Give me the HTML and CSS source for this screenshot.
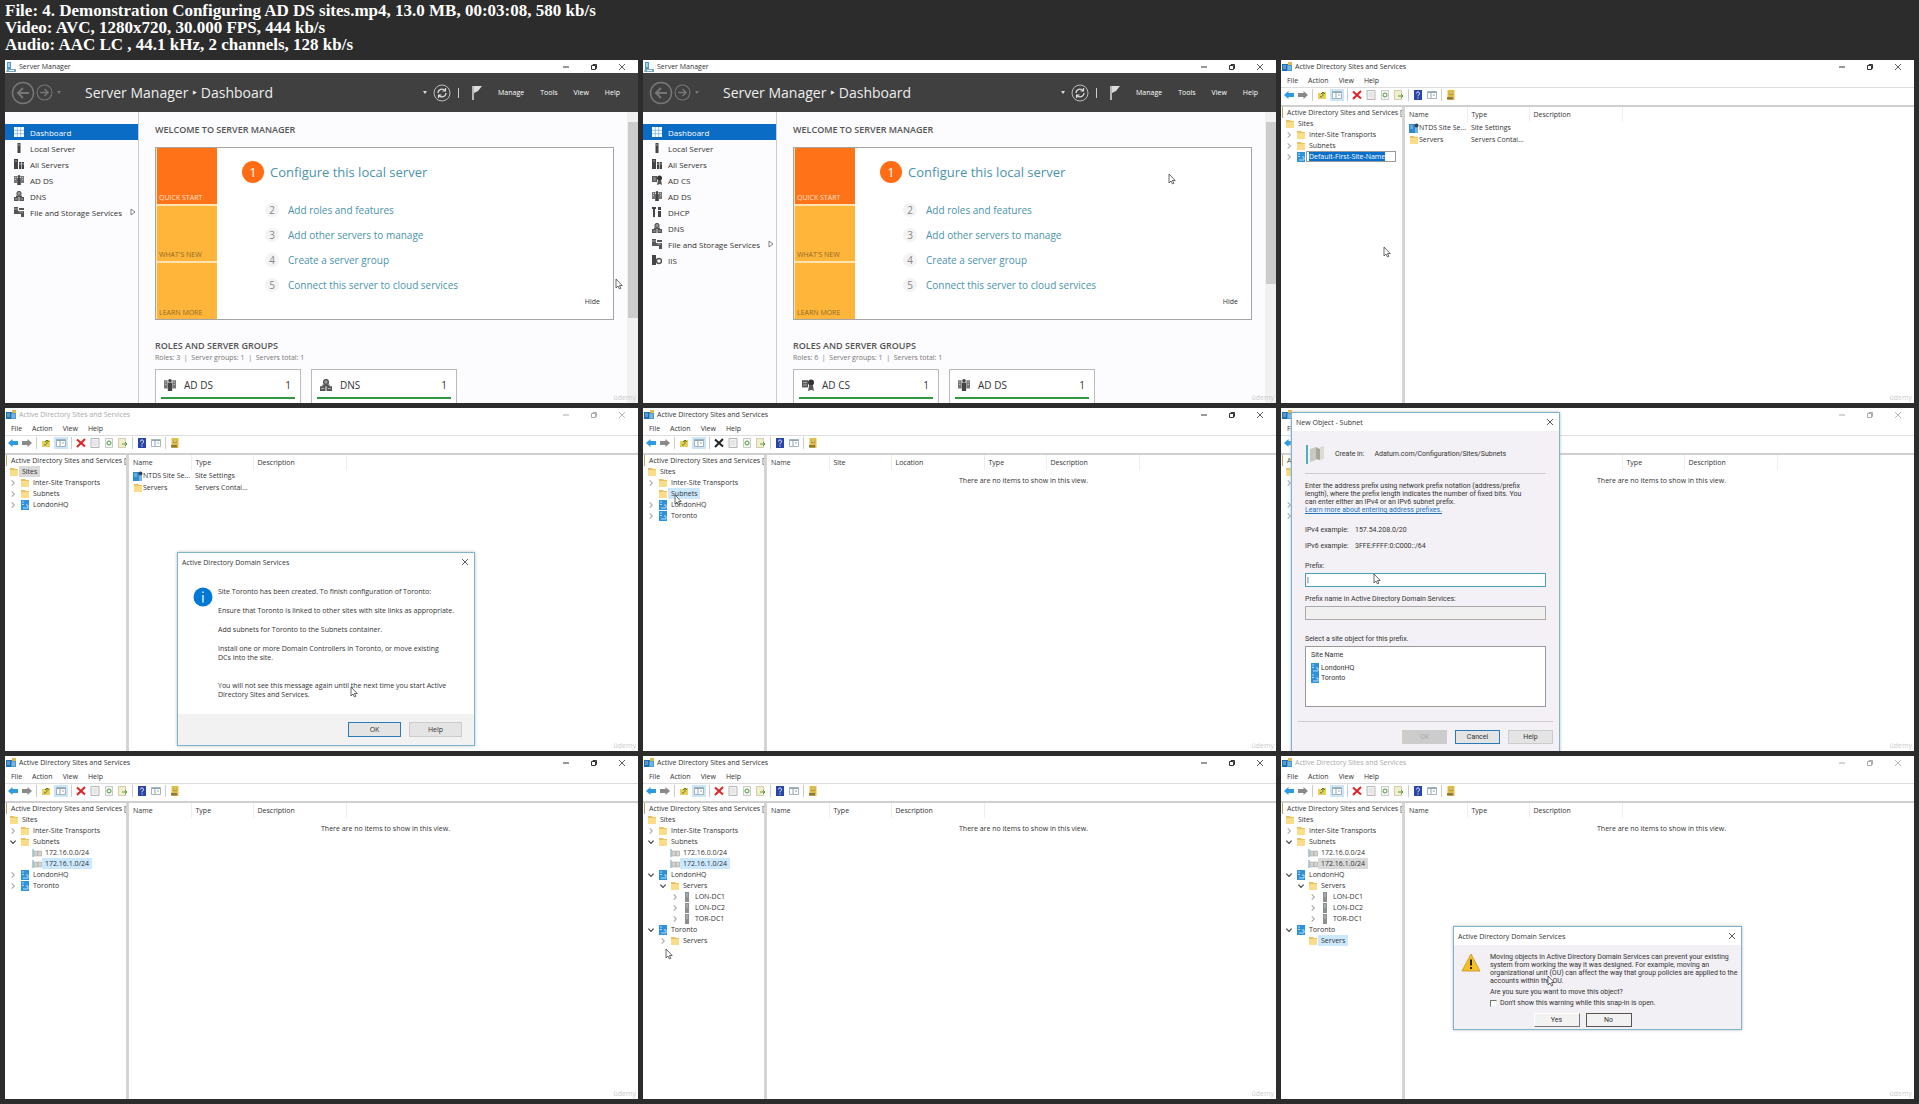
FILE: index.html
```html
<!DOCTYPE html>
<html lang="en">
<head>
  <meta charset="utf-8">
  <title>4. Demonstration Configuring AD DS sites.mp4</title>
  <link rel="stylesheet" href="styles.css">
</head>
<body>
  <!-- Shared icons -->
  <svg class="sprite" aria-hidden="true">
    <symbol id="i-cursor" viewBox="0 0 8 12"><path d="M1 1v9l2-2 1.5 3 1.3-.7L4.500 7.500h2.700z" fill="#fff" stroke="#444" stroke-width=".8"/></symbol>
    <symbol id="i-sm" viewBox="0 0 10 10"><path d="M1 0h4v7H1z" fill="#4a9bd0"/><path d="M1 7h9v3H0z" fill="#7aa6c0"/><path d="M2 2h2M2 4h2M3 8.500h5" stroke="#fff"/></symbol>
    <symbol id="i-ad" viewBox="0 0 11 9"><path d="M0 2h7v7H0z" fill="#1f6fb0"/><path d="M5 3h5v6H5z" fill="#4c9ad0"/><path d="M6 0h4v3H6z" fill="#e0b94d"/><path d="M1 4h3M1 6h3M6 5h3M6 7h3" stroke="#cfe7f7" stroke-width=".7"/></symbol>
    <symbol id="i-min" viewBox="0 0 8 8"><path d="M1 4h6" stroke="currentColor" fill="none"/></symbol>
    <symbol id="i-max" viewBox="0 0 8 8"><path d="M1.500 2.500h4v4h-4zM3 2.500v-1h3.500V5.500h-1" stroke="currentColor" fill="none"/></symbol>
    <symbol id="i-close" viewBox="0 0 8 8"><path d="M1 1l6 6M7 1L1 7" stroke="currentColor" fill="none" stroke-width=".8"/></symbol>
    <symbol id="i-back" viewBox="0 0 24 24"><circle cx="12" cy="12" r="10.500" fill="none" stroke="#777" stroke-width="1.500"/><path d="M18 12H7M12 7l-5 5 5 5" fill="none" stroke="#777" stroke-width="2"/></symbol>
    <symbol id="i-refresh" viewBox="0 0 18 18"><circle cx="9" cy="9" r="8" fill="none" stroke="#bbb"/><path d="M5 9a4 4 0 0 1 7-2.500M13 9a4 4 0 0 1-7 2.500M12.500 4v3h-3M5.500 14v-3h3" fill="none" stroke="#ddd" stroke-width="1.200"/></symbol>
    <symbol id="i-flag" viewBox="0 0 10 14"><path d="M1 0v14" stroke="#ddd" stroke-width="1.500"/><path d="M2 0h8L6 5l-4 2z" fill="#ddd"/></symbol>

    <symbol id="i-grid" viewBox="0 0 10 10"><path d="M0 0h10v10H0z" fill="#fff"/><path d="M0 3.300h10M0 6.700h10M3.300 0v10M6.700 0v10" stroke="#5aa0dc" stroke-width=".6"/></symbol>
    <symbol id="i-local" viewBox="0 0 10 10"><path d="M3.500 0h3v10h-3z" fill="#444"/><path d="M4 2h2" stroke="#bbb" stroke-width=".8"/></symbol>
    <symbol id="i-all" viewBox="0 0 10 10"><path d="M0 0h4v10H0zM5 3h2.200v7H5zM7.800 3H10v7H7.800z" fill="#444"/><path d="M1 2h2M5 5h5" stroke="#ccc" stroke-width=".7"/></symbol>
    <symbol id="i-adds" viewBox="0 0 10 10"><path d="M0 1h3v7H0zM7 1h3v7H7z" fill="#777"/><path d="M3.200 3h3.600v7H3.200z" fill="#444"/><circle cx="5" cy="1.500" r="1.500" fill="#444"/><path d="M1 2.500h1M8 2.500h1M1 4.500h1M8 4.500h1" stroke="#ddd" stroke-width=".7"/></symbol>
    <symbol id="i-adcs" viewBox="0 0 10 10"><path d="M0 1h5v6H0z" fill="#555"/><circle cx="7.500" cy="3" r="2.500" fill="#333"/><path d="M6 5h3l1 5-2-1-3 1z" fill="#555"/><path d="M1 3h3M1 5h3" stroke="#ccc" stroke-width=".7"/></symbol>
    <symbol id="i-dhcp" viewBox="0 0 10 10"><path d="M0 0h4v2H3v8H1V2H0zM6 0h3v3H6zM6 4h3v6H6z" fill="#444"/></symbol>
    <symbol id="i-dns" viewBox="0 0 10 10"><circle cx="5" cy="2.500" r="2" fill="#999" stroke="#555" stroke-width="1.200"/><path d="M0 6h4.600v4H0zM5.400 6H10v4H5.400zM2 4.500h6V6H2z" fill="#555"/><path d="M1 8h2.500M6.500 8H9" stroke="#ccc" stroke-width=".7"/></symbol>
    <symbol id="i-file" viewBox="0 0 10 10"><path d="M0 0h4v7H0zM5 1h5v2H5zM4 4h6v6H7V7H4z" fill="#555"/><path d="M0 2h4M5 5h4" stroke="#ccc" stroke-width=".7"/></symbol>
    <symbol id="i-iis" viewBox="0 0 10 10"><path d="M0 0h4v10H0z" fill="#444"/><circle cx="7" cy="6" r="2.500" fill="none" stroke="#555" stroke-width="1.500"/></symbol>

    <symbol id="i-folder" viewBox="0 0 10 10"><path d="M1 1h4l1 1h3v7H1z" fill="#e8c163"/><path d="M1 3h8v6H1z" fill="#fbdc88"/></symbol>
    <symbol id="i-site" viewBox="0 0 10 10"><path d="M1 0h8v10H1z" fill="#2f93dc"/><path d="M2 2h2M2 4.500h2M6 5h2v3H3" stroke="#bfe2fa" stroke-width=".9" fill="none"/></symbol>
    <symbol id="i-ntds" viewBox="0 0 10 10"><path d="M0 1h6v9H0z" fill="#2f8bd0"/><path d="M6 4h3v6H6z" fill="#70b4e4"/><circle cx="7.500" cy="2.500" r="2" fill="#345"/><path d="M1 3h3M1 5h3" stroke="#cde" stroke-width=".7"/></symbol>
    <symbol id="i-subnet" viewBox="0 0 10 10"><path d="M1 1v8" stroke="#5f9db0"/><path d="M2 3h3.500v5H2zM6 3h3.500v5H6z" fill="#d5d5d0" stroke="#999" stroke-width=".5"/></symbol>
    <symbol id="i-server" viewBox="0 0 10 10"><path d="M3 0h4v10H3z" fill="#8b8f8f"/><path d="M4 2h2M4 4h2" stroke="#ddd" stroke-width=".7"/></symbol>
    <symbol id="i-closed" viewBox="0 0 6 6"><path d="M2 1l2 2-2 2" fill="none" stroke="#aaa" stroke-width=".8"/></symbol>
    <symbol id="i-open" viewBox="0 0 6 6"><path d="M1 2l2 2 2-2" fill="none" stroke="#444" stroke-width=".9"/></symbol>
    <symbol id="i-more" viewBox="0 0 6 8"><path d="M1 1l4 3-4 3z" fill="none" stroke="#666" stroke-width=".8"/></symbol>

    <symbol id="t-left" viewBox="0 0 10 10"><path d="M0 5l4.500-4v2H10v4H4.500v2z" fill="#2c9be0"/></symbol>
    <symbol id="t-right" viewBox="0 0 10 10"><path d="M10 5L5.500 1v2H0v4h5.500v2z" fill="#8a8a8a"/></symbol>
    <symbol id="t-up" viewBox="0 0 10 10"><path d="M1 3h3l1-1h4v7H1z" fill="#e8cf5c"/><path d="M3 7c3 0 3-2 3-4M4 4l2-2 2 2" stroke="#5a7d20" fill="none"/></symbol>
    <symbol id="t-tree" viewBox="0 0 10 10"><path d="M.5 1.500h9v7h-9z" fill="#fff" stroke="#8fa3af" stroke-width=".8"/><path d="M1 2.500h8M4 3v5M6 5h2" stroke="#8fa3af"/></symbol>
    <symbol id="t-delete" viewBox="0 0 10 10"><path d="M1 1.500l8 7M9 1L1 9" stroke="currentColor" stroke-width="2"/></symbol>
    <symbol id="t-props" viewBox="0 0 10 10"><path d="M1 .5h8v9H1z" fill="#f4f4f4" stroke="#999" stroke-width=".7"/><path d="M2.500 3h5M2.500 5h5M2.500 7h5" stroke="#ccc" stroke-width=".7"/></symbol>
    <symbol id="t-refresh" viewBox="0 0 10 10"><path d="M1.500.5h7v9h-7z" fill="#f7f7f0" stroke="#aaa" stroke-width=".6"/><circle cx="5" cy="5" r="2" fill="none" stroke="#4b9a4b"/></symbol>
    <symbol id="t-export" viewBox="0 0 10 10"><path d="M.5.5h7v9h-7z" fill="#f3eecb" stroke="#b5b088" stroke-width=".6"/><path d="M4 6h5M7 4l2 2-2 2" stroke="#5a9a3a" fill="none"/></symbol>
    <symbol id="t-help" viewBox="0 0 10 10"><path d="M1 0h8v10H1z" fill="#2746a8"/><path d="M3.500 3.500c0-2 3-2 3 0C6.500 5 5 4.800 5 6.300M5 7.500v1" stroke="#fff" fill="none"/></symbol>
    <symbol id="t-find" viewBox="0 0 10 10"><path d="M1.500 0h7v10h-7z" fill="#e0bd45"/><path d="M1 7h6v2.500H1z" fill="#8c7a40"/><path d="M3 2h4v3H3z" fill="#b89a3e"/><path d="M3.500 3h3" stroke="#f7eaa8"/></symbol>

    <symbol id="i-info" viewBox="0 0 20 20"><circle cx="10" cy="10" r="9.500" fill="#0078d7"/><path d="M10 4.500v1.500M10 8v7.500" stroke="#fff" stroke-width="1.300"/></symbol>
    <symbol id="i-warn" viewBox="0 0 20 20"><path d="M10 1l9 17H1z" fill="#f7c01e" stroke="#c9a03c" stroke-linejoin="round"/><path d="M10 6.500v6M10 14v2" stroke="#222" stroke-width="2"/></symbol>
    <symbol id="i-book" viewBox="0 0 20 20"><path d="M2 1v19" stroke="#4fb0bd" stroke-width="2"/><path d="M5 5l6-2v13l-6 2z" fill="#c9c9c4"/><path d="M11 3l4 2v11l-4-1z" fill="#a5a69c"/><path d="M15 3l4-1v13l-4 1z" fill="#dddcd0"/></symbol>
  </svg>

  <!-- Title bar buttons, same for every window -->
  <template id="window-buttons">
    <button type="button" aria-label="Minimize"><svg><use href="#i-min"/></svg></button>
    <button type="button" aria-label="Restore"><svg><use href="#i-max"/></svg></button>
    <button type="button" aria-label="Close"><svg><use href="#i-close"/></svg></button>
  </template>

  <template id="manager-top">
    <div class="titlebar">
      <svg class="app-icon"><use href="#i-sm"/></svg>
      <span class="caption">Server Manager</span>
      <div class="window-buttons"></div>
    </div>
    <div class="ribbon">
      <button type="button" class="nav-back" aria-label="Back"><svg><use href="#i-back"/></svg></button>
      <button type="button" class="nav-forward" aria-label="Forward"><svg><use href="#i-back"/></svg></button>
      <span class="tiny-arrow"></span>
      <h2>Server Manager <i>‣</i> Dashboard</h2>
      <span class="tiny-arrow light"></span>
      <button type="button" class="refresh" aria-label="Refresh"><svg><use href="#i-refresh"/></svg></button>
      <span class="bar"></span>
      <button type="button" class="flag" aria-label="Notifications"><svg><use href="#i-flag"/></svg></button>
      <div class="ribbon-menu">
        <button type="button">Manage</button>
        <button type="button">Tools</button>
        <button type="button">View</button>
        <button type="button">Help</button>
      </div>
    </div>
  </template>

  <template id="welcome">
    <h3>WELCOME TO SERVER MANAGER</h3>
    <div class="welcome-box">
      <div class="tiles">
        <a href="#" class="start">QUICK START</a>
        <a href="#">WHAT'S NEW</a>
        <a href="#">LEARN MORE</a>
      </div>
      <ol class="steps">
        <li class="first"><b>1</b><a href="#">Configure this local server</a></li>
        <li><b>2</b><a href="#">Add roles and features</a></li>
        <li><b>3</b><a href="#">Add other servers to manage</a></li>
        <li><b>4</b><a href="#">Create a server group</a></li>
        <li><b>5</b><a href="#">Connect this server to cloud services</a></li>
      </ol>
      <button type="button" class="hide">Hide</button>
    </div>
  </template>

  <template id="console-top">
    <div class="titlebar">
      <svg class="app-icon"><use href="#i-ad"/></svg>
      <span class="caption">Active Directory Sites and Services</span>
      <div class="window-buttons"></div>
    </div>
    <div class="menubar">
      <button type="button">File</button>
      <button type="button">Action</button>
      <button type="button">View</button>
      <button type="button">Help</button>
    </div>
    <div class="toolbar">
      <button type="button" aria-label="Back"><svg><use href="#t-left"/></svg></button>
      <button type="button" aria-label="Forward"><svg><use href="#t-right"/></svg></button>
      <span class="sep"></span>
      <button type="button" aria-label="Up one level"><svg><use href="#t-up"/></svg></button>
      <button type="button" class="pressed" aria-label="Show console tree"><svg><use href="#t-tree"/></svg></button>
      <span class="sep"></span>
      <button type="button" class="delete" aria-label="Delete"><svg><use href="#t-delete"/></svg></button>
      <button type="button" aria-label="Properties"><svg><use href="#t-props"/></svg></button>
      <button type="button" aria-label="Refresh"><svg><use href="#t-refresh"/></svg></button>
      <button type="button" aria-label="Export list"><svg><use href="#t-export"/></svg></button>
      <span class="sep"></span>
      <button type="button" aria-label="Help"><svg><use href="#t-help"/></svg></button>
      <button type="button" aria-label="Action pane"><svg><use href="#t-tree"/></svg></button>
      <span class="sep"></span>
      <button type="button" aria-label="Find"><svg><use href="#t-find"/></svg></button>
    </div>
  </template>

  <header class="info">
    <p>File: 4. Demonstration Configuring AD DS sites.mp4, 13.0 MB, 00:03:08, 580 kb/s</p>
    <p>Video: AVC, 1280x720, 30.000 FPS, 444 kb/s</p>
    <p>Audio: AAC LC , 44.1 kHz, 2 channels, 128 kb/s</p>
  </header>

  <main class="sheet">
    <!-- 1 -->
    <section class="frame manager">
      <div data-template="manager-top"></div>
      <div class="manager-body">
        <nav class="sidebar">
          <a href="#" class="active"><svg><use href="#i-grid"/></svg>Dashboard</a>
          <a href="#"><svg><use href="#i-local"/></svg>Local Server</a>
          <a href="#"><svg><use href="#i-all"/></svg>All Servers</a>
          <a href="#"><svg><use href="#i-adds"/></svg>AD DS</a>
          <a href="#"><svg><use href="#i-dns"/></svg>DNS</a>
          <a href="#"><svg><use href="#i-file"/></svg>File and Storage Services<svg class="more"><use href="#i-more"/></svg></a>
        </nav>
        <div class="dashboard">
          <div data-template="welcome"></div>
          <h3 class="roles-title">ROLES AND SERVER GROUPS</h3>
          <p class="counts">Roles: 3 &nbsp;|&nbsp; Server groups: 1 &nbsp;|&nbsp; Servers total: 1</p>
          <div class="cards">
            <div class="card"><svg><use href="#i-adds"/></svg>AD DS<span>1</span></div>
            <div class="card"><svg><use href="#i-dns"/></svg>DNS<span>1</span></div>
          </div>
        </div>
        <div class="scrollbar"><div class="thumb tall"></div></div>
      </div>
      <svg class="cursor cursor-1"><use href="#i-cursor"/></svg>
      <span class="mark">ûdemy</span>
    </section>

    <!-- 2 -->
    <section class="frame manager">
      <div data-template="manager-top"></div>
      <div class="manager-body">
        <nav class="sidebar">
          <a href="#" class="active"><svg><use href="#i-grid"/></svg>Dashboard</a>
          <a href="#"><svg><use href="#i-local"/></svg>Local Server</a>
          <a href="#"><svg><use href="#i-all"/></svg>All Servers</a>
          <a href="#"><svg><use href="#i-adcs"/></svg>AD CS</a>
          <a href="#"><svg><use href="#i-adds"/></svg>AD DS</a>
          <a href="#"><svg><use href="#i-dhcp"/></svg>DHCP</a>
          <a href="#"><svg><use href="#i-dns"/></svg>DNS</a>
          <a href="#"><svg><use href="#i-file"/></svg>File and Storage Services<svg class="more"><use href="#i-more"/></svg></a>
          <a href="#"><svg><use href="#i-iis"/></svg>IIS</a>
        </nav>
        <div class="dashboard">
          <div data-template="welcome"></div>
          <h3 class="roles-title">ROLES AND SERVER GROUPS</h3>
          <p class="counts">Roles: 6 &nbsp;|&nbsp; Server groups: 1 &nbsp;|&nbsp; Servers total: 1</p>
          <div class="cards">
            <div class="card"><svg><use href="#i-adcs"/></svg>AD CS<span>1</span></div>
            <div class="card"><svg><use href="#i-adds"/></svg>AD DS<span>1</span></div>
          </div>
        </div>
        <div class="scrollbar"><div class="thumb"></div></div>
      </div>
      <svg class="cursor cursor-2"><use href="#i-cursor"/></svg>
      <span class="mark">ûdemy</span>
    </section>

    <!-- 3 -->
    <section class="frame console">
      <div data-template="console-top"></div>
      <div class="console-body">
        <ul class="tree">
          <li class="root">Active Directory Sites and Services [</li>
          <li><svg><use href="#i-folder"/></svg><span>Sites</span></li>
          <li class="l1"><svg class="chev"><use href="#i-closed"/></svg><svg><use href="#i-folder"/></svg><span>Inter-Site Transports</span></li>
          <li class="l1"><svg class="chev"><use href="#i-closed"/></svg><svg><use href="#i-folder"/></svg><span>Subnets</span></li>
          <li class="l1"><svg class="chev"><use href="#i-closed"/></svg><svg><use href="#i-site"/></svg><span class="rename"><mark>Default-First-Site-Name</mark></span></li>
        </ul>
        <table class="list">
          <thead><tr><th class="w-sm">Name</th><th class="w-sm">Type</th><th class="w-lg">Description</th><th></th></tr></thead>
          <tbody>
            <tr><td><svg><use href="#i-ntds"/></svg>NTDS Site Se...</td><td>Site Settings</td><td></td><td></td></tr>
            <tr><td><svg><use href="#i-folder"/></svg>Servers</td><td>Servers Contai...</td><td></td><td></td></tr>
          </tbody>
        </table>
      </div>
      <svg class="cursor cursor-3"><use href="#i-cursor"/></svg>
      <span class="mark">ûdemy</span>
    </section>

    <!-- 4 -->
    <section class="frame console inactive">
      <div data-template="console-top"></div>
      <div class="console-body">
        <ul class="tree">
          <li class="root">Active Directory Sites and Services [</li>
          <li><svg><use href="#i-folder"/></svg><span class="picked">Sites</span></li>
          <li class="l1"><svg class="chev"><use href="#i-closed"/></svg><svg><use href="#i-folder"/></svg><span>Inter-Site Transports</span></li>
          <li class="l1"><svg class="chev"><use href="#i-closed"/></svg><svg><use href="#i-folder"/></svg><span>Subnets</span></li>
          <li class="l1"><svg class="chev"><use href="#i-closed"/></svg><svg><use href="#i-site"/></svg><span>LondonHQ</span></li>
        </ul>
        <table class="list">
          <thead><tr><th class="w-sm">Name</th><th class="w-sm">Type</th><th class="w-lg">Description</th><th></th></tr></thead>
          <tbody>
            <tr><td><svg><use href="#i-ntds"/></svg>NTDS Site Se...</td><td>Site Settings</td><td></td><td></td></tr>
            <tr><td><svg><use href="#i-folder"/></svg>Servers</td><td>Servers Contai...</td><td></td><td></td></tr>
          </tbody>
        </table>
      </div>
      <div class="dialog created" role="dialog">
        <div class="dialog-title">Active Directory Domain Services<button type="button" aria-label="Close"><svg><use href="#i-close"/></svg></button></div>
        <div class="message">
          <svg><use href="#i-info"/></svg>
          <div>
            <p>Site Toronto has been created. To finish configuration of Toronto:</p>
            <p>Ensure that Toronto is linked to other sites with site links as appropriate.</p>
            <p>Add subnets for Toronto to the Subnets container.</p>
            <p>Install one or more Domain Controllers in Toronto, or move existing<br>DCs into the site.</p>
            <p class="last">You will not see this message again until the next time you start Active<br>Directory Sites and Services.</p>
          </div>
        </div>
        <div class="actions">
          <button type="button" class="default">OK</button>
          <button type="button">Help</button>
        </div>
      </div>
      <svg class="cursor cursor-4"><use href="#i-cursor"/></svg>
      <span class="mark">ûdemy</span>
    </section>

    <!-- 5 -->
    <section class="frame console no-delete">
      <div data-template="console-top"></div>
      <div class="console-body">
        <ul class="tree">
          <li class="root">Active Directory Sites and Services [</li>
          <li><svg><use href="#i-folder"/></svg><span>Sites</span></li>
          <li class="l1"><svg class="chev"><use href="#i-closed"/></svg><svg><use href="#i-folder"/></svg><span>Inter-Site Transports</span></li>
          <li class="l1"><svg class="chev"></svg><svg><use href="#i-folder"/></svg><span class="selected">Subnets</span></li>
          <li class="l1"><svg class="chev"><use href="#i-closed"/></svg><svg><use href="#i-site"/></svg><span>LondonHQ</span></li>
          <li class="l1"><svg class="chev"><use href="#i-closed"/></svg><svg><use href="#i-site"/></svg><span>Toronto</span></li>
        </ul>
        <table class="list">
          <thead><tr><th class="w-sm">Name</th><th class="w-sm">Site</th><th class="w-lg">Location</th><th class="w-sm">Type</th><th class="w-lg">Description</th><th></th></tr></thead>
          <tbody><tr><td colspan="6" class="empty">There are no items to show in this view.</td></tr></tbody>
        </table>
      </div>
      <svg class="cursor cursor-5"><use href="#i-cursor"/></svg>
      <span class="mark">ûdemy</span>
    </section>

    <!-- 6 -->
    <section class="frame console inactive no-delete">
      <div data-template="console-top"></div>
      <div class="console-body">
        <ul class="tree">
          <li class="root">A</li>
          <li><svg><use href="#i-folder"/></svg></li>
          <li class="l1"><svg class="chev"><use href="#i-closed"/></svg></li>
          <li class="l1"></li>
          <li class="l1"><svg class="chev"><use href="#i-closed"/></svg></li>
          <li class="l1"><svg class="chev"><use href="#i-closed"/></svg></li>
        </ul>
        <table class="list">
          <thead><tr><th class="w-sm"></th><th class="w-sm"></th><th class="w-lg"></th><th class="w-sm">Type</th><th class="w-lg">Description</th><th></th></tr></thead>
          <tbody><tr><td colspan="6" class="empty">There are no items to show in this view.</td></tr></tbody>
        </table>
      </div>
      <form class="dialog subnet" role="dialog">
        <div class="dialog-title">New Object - Subnet<button type="button" aria-label="Close"><svg><use href="#i-close"/></svg></button></div>
        <div class="subnet-body">
          <div class="create-in"><svg><use href="#i-book"/></svg><span>Create in:</span><span>Adatum.com/Configuration/Sites/Subnets</span></div>
          <p>Enter the address prefix using network prefix notation (address/prefix<br>length), where the prefix length indicates the number of fixed bits. You<br>can enter either an IPv4 or an IPv6 subnet prefix.<br><a href="#">Learn more about entering address prefixes.</a></p>
          <dl>
            <dt>IPv4 example:</dt><dd>157.54.208.0/20</dd>
            <dt>IPv6 example:</dt><dd>3FFE:FFFF:0:C000::/64</dd>
          </dl>
          <label for="prefix">Prefix:</label>
          <input type="text" id="prefix" class="focused" value="|">
          <label for="prefixName">Prefix name in Active Directory Domain Services:</label>
          <input type="text" id="prefixName" readonly>
          <div class="pick-label" id="pickLabel">Select a site object for this prefix.</div>
          <ul class="sites" aria-labelledby="pickLabel">
            <li class="head">Site Name</li>
            <li><svg><use href="#i-site"/></svg>LondonHQ</li>
            <li><svg><use href="#i-site"/></svg>Toronto</li>
          </ul>
        </div>
        <div class="actions">
          <button type="button" disabled>OK</button>
          <button type="button" class="default">Cancel</button>
          <button type="button">Help</button>
        </div>
      </form>
      <svg class="cursor cursor-6"><use href="#i-cursor"/></svg>
      <span class="mark">ûdemy</span>
    </section>

    <!-- 7 -->
    <section class="frame console">
      <div data-template="console-top"></div>
      <div class="console-body">
        <ul class="tree">
          <li class="root">Active Directory Sites and Services [</li>
          <li><svg><use href="#i-folder"/></svg><span>Sites</span></li>
          <li class="l1"><svg class="chev"><use href="#i-closed"/></svg><svg><use href="#i-folder"/></svg><span>Inter-Site Transports</span></li>
          <li class="l1"><svg class="chev"><use href="#i-open"/></svg><svg><use href="#i-folder"/></svg><span>Subnets</span></li>
          <li class="l2"><svg class="chev"></svg><svg><use href="#i-subnet"/></svg><span>172.16.0.0/24</span></li>
          <li class="l2"><svg class="chev"></svg><svg><use href="#i-subnet"/></svg><span class="selected">172.16.1.0/24</span></li>
          <li class="l1"><svg class="chev"><use href="#i-closed"/></svg><svg><use href="#i-site"/></svg><span>LondonHQ</span></li>
          <li class="l1"><svg class="chev"><use href="#i-closed"/></svg><svg><use href="#i-site"/></svg><span>Toronto</span></li>
        </ul>
        <table class="list">
          <thead><tr><th class="w-sm">Name</th><th class="w-sm">Type</th><th class="w-lg">Description</th><th></th></tr></thead>
          <tbody><tr><td colspan="4" class="empty">There are no items to show in this view.</td></tr></tbody>
        </table>
      </div>
      <span class="mark">ûdemy</span>
    </section>

    <!-- 8 -->
    <section class="frame console">
      <div data-template="console-top"></div>
      <div class="console-body">
        <ul class="tree">
          <li class="root">Active Directory Sites and Services [</li>
          <li><svg><use href="#i-folder"/></svg><span>Sites</span></li>
          <li class="l1"><svg class="chev"><use href="#i-closed"/></svg><svg><use href="#i-folder"/></svg><span>Inter-Site Transports</span></li>
          <li class="l1"><svg class="chev"><use href="#i-open"/></svg><svg><use href="#i-folder"/></svg><span>Subnets</span></li>
          <li class="l2"><svg class="chev"></svg><svg><use href="#i-subnet"/></svg><span>172.16.0.0/24</span></li>
          <li class="l2"><svg class="chev"></svg><svg><use href="#i-subnet"/></svg><span class="selected">172.16.1.0/24</span></li>
          <li class="l1"><svg class="chev"><use href="#i-open"/></svg><svg><use href="#i-site"/></svg><span>LondonHQ</span></li>
          <li class="l2"><svg class="chev"><use href="#i-open"/></svg><svg><use href="#i-folder"/></svg><span>Servers</span></li>
          <li class="l3"><svg class="chev"><use href="#i-closed"/></svg><svg><use href="#i-server"/></svg><span>LON-DC1</span></li>
          <li class="l3"><svg class="chev"><use href="#i-closed"/></svg><svg><use href="#i-server"/></svg><span>LON-DC2</span></li>
          <li class="l3"><svg class="chev"><use href="#i-closed"/></svg><svg><use href="#i-server"/></svg><span>TOR-DC1</span></li>
          <li class="l1"><svg class="chev"><use href="#i-open"/></svg><svg><use href="#i-site"/></svg><span>Toronto</span></li>
          <li class="l2"><svg class="chev"><use href="#i-closed"/></svg><svg><use href="#i-folder"/></svg><span>Servers</span></li>
        </ul>
        <table class="list">
          <thead><tr><th class="w-sm">Name</th><th class="w-sm">Type</th><th class="w-lg">Description</th><th></th></tr></thead>
          <tbody><tr><td colspan="4" class="empty">There are no items to show in this view.</td></tr></tbody>
        </table>
      </div>
      <svg class="cursor cursor-8"><use href="#i-cursor"/></svg>
      <span class="mark">ûdemy</span>
    </section>

    <!-- 9 -->
    <section class="frame console inactive">
      <div data-template="console-top"></div>
      <div class="console-body">
        <ul class="tree">
          <li class="root">Active Directory Sites and Services [</li>
          <li><svg><use href="#i-folder"/></svg><span>Sites</span></li>
          <li class="l1"><svg class="chev"><use href="#i-closed"/></svg><svg><use href="#i-folder"/></svg><span>Inter-Site Transports</span></li>
          <li class="l1"><svg class="chev"><use href="#i-open"/></svg><svg><use href="#i-folder"/></svg><span>Subnets</span></li>
          <li class="l2"><svg class="chev"></svg><svg><use href="#i-subnet"/></svg><span>172.16.0.0/24</span></li>
          <li class="l2"><svg class="chev"></svg><svg><use href="#i-subnet"/></svg><span class="picked">172.16.1.0/24</span></li>
          <li class="l1"><svg class="chev"><use href="#i-open"/></svg><svg><use href="#i-site"/></svg><span>LondonHQ</span></li>
          <li class="l2"><svg class="chev"><use href="#i-open"/></svg><svg><use href="#i-folder"/></svg><span>Servers</span></li>
          <li class="l3"><svg class="chev"><use href="#i-closed"/></svg><svg><use href="#i-server"/></svg><span>LON-DC1</span></li>
          <li class="l3"><svg class="chev"><use href="#i-closed"/></svg><svg><use href="#i-server"/></svg><span>LON-DC2</span></li>
          <li class="l3"><svg class="chev"><use href="#i-closed"/></svg><svg><use href="#i-server"/></svg><span>TOR-DC1</span></li>
          <li class="l1"><svg class="chev"><use href="#i-open"/></svg><svg><use href="#i-site"/></svg><span>Toronto</span></li>
          <li class="l2"><svg class="chev"></svg><svg><use href="#i-folder"/></svg><span class="selected">Servers</span></li>
        </ul>
        <table class="list">
          <thead><tr><th class="w-sm">Name</th><th class="w-sm">Type</th><th class="w-lg">Description</th><th></th></tr></thead>
          <tbody><tr><td colspan="4" class="empty">There are no items to show in this view.</td></tr></tbody>
        </table>
      </div>
      <form class="dialog moving" role="dialog">
        <div class="dialog-title">Active Directory Domain Services<button type="button" aria-label="Close"><svg><use href="#i-close"/></svg></button></div>
        <div class="warning">
          <svg><use href="#i-warn"/></svg>
          <div>
            <p>Moving objects in Active Directory Domain Services can prevent your existing<br>system from working the way it was designed. For example, moving an<br>organizational unit (OU) can affect the way that group policies are applied to the<br>accounts within the OU.</p>
            <p>Are you sure you want to move this object?</p>
            <label for="dontShow"><input type="checkbox" id="dontShow">Don't show this warning while this snap-in is open.</label>
          </div>
        </div>
        <div class="actions classic">
          <button type="button">Yes</button>
          <button type="button" class="default">No</button>
        </div>
      </form>
      <svg class="cursor cursor-9"><use href="#i-cursor"/></svg>
      <span class="mark">ûdemy</span>
    </section>
  </main>
  <script src="script.js"></script>
</body>
</html>
```
FILE: styles.css
```css
* {
  box-sizing: border-box;
}
body {
  margin: 0;
  background-color: #2c2c2c;
  font-family: "Open Sans", "Noto Sans", sans-serif;
  font-size: 7px;
  color: #333;
}
p, h2, h3, ul, ol, dl, dd {
  margin: 0;
  padding: 0;
}
ul, ol {
  list-style: none;
}
a {
  color: inherit;
  text-decoration: none;
}
button {
  padding: 0;
  border: none;
  background: none;
  font: inherit;
  color: inherit;
}
svg {
  display: block;
  width: 10px;
  height: 10px;
  flex: none;
}
.sprite {
  position: absolute;
  width: 0;
  height: 0;
}

/* File details */
.info {
  padding: 2px 5px 7px;
  font-family: "Liberation Serif", serif;
  font-weight: bold;
  font-size: 17px;
  line-height: 17px;
  color: #fff;
}
.sheet {
  display: grid;
  grid-template-columns: repeat(3, 1fr);
  gap: 5px;
  padding: 0 5px 5px;
}
.frame {
  position: relative;
  display: flex;
  flex-direction: column;
  aspect-ratio: 633 / 343;
  min-width: 0;
  overflow: hidden;
  background-color: #fff;
}
.cursor {
  position: absolute;
  width: 8px;
  height: 12px;
}
.cursor-1 { left: 610px; top: 218px; }
.cursor-2 { left: 525px; top: 113px; }
.cursor-3 { left: 102px; top: 186px; }
.cursor-4 { left: 345px; top: 278px; }
.cursor-5 { left: 31px; top: 86px; }
.cursor-6 { left: 92px; top: 165px; }
.cursor-8 { left: 22px; top: 192px; }
.cursor-9 { left: 266px; top: 219px; }
.mark {
  position: absolute;
  right: 2px;
  bottom: 1px;
  line-height: 9px;
  color: #ccc;
}

/* Window title bars */
.titlebar {
  display: flex;
  align-items: center;
  height: 13px;
  padding: 0 2px 0 1px;
}
.titlebar .caption {
  flex: 1;
  margin-left: 3px;
}
.window-buttons {
  display: flex;
}
.window-buttons button {
  display: flex;
  justify-content: center;
  width: 28px;
}
.window-buttons svg {
  width: 8px;
  height: 8px;
}
.inactive .titlebar .caption,
.inactive .window-buttons {
  color: #aaa;
}

/* Server Manager */
.ribbon {
  display: flex;
  align-items: center;
  height: 39px;
  padding-left: 6px;
  background-color: #404040;
  color: #fff;
}
.nav-back svg {
  width: 24px;
  height: 24px;
}
.nav-forward svg {
  width: 17px;
  height: 17px;
  margin-left: 1px;
  transform: scaleX(-1);
}
.tiny-arrow {
  margin-left: 4px;
  border: 2px solid transparent;
  border-top: 3px solid #777;
  border-bottom: none;
}
.tiny-arrow.light {
  border-top-color: #ddd;
}
.ribbon h2 {
  flex: 1;
  margin-left: 24px;
  font-size: 14px;
  font-weight: 400;
  line-height: 20px;
  color: #eee;
}
.ribbon h2 i {
  font-style: normal;
}
.refresh svg {
  width: 18px;
  height: 18px;
  margin-left: 6px;
}
.bar {
  width: 1px;
  height: 10px;
  margin-left: 7px;
  background-color: #ccc;
}
.flag svg {
  width: 10px;
  height: 14px;
  margin-left: 13px;
}
.ribbon-menu {
  display: flex;
  gap: 16px;
  margin-left: 16px;
  padding-right: 18px;
}
.manager-body {
  display: flex;
  flex: 1;
  min-height: 0;
  background-color: #fcfbfd;
}
.sidebar {
  width: 134px;
  padding-top: 12px;
  border-right: 1px solid #ccc;
  font-size: 8px;
}
.sidebar a {
  display: flex;
  align-items: center;
  gap: 6px;
  height: 16px;
  padding-left: 9px;
}
.sidebar .active {
  background-color: #0a6cc4;
  color: #fff;
}
.sidebar .more {
  width: 6px;
  height: 8px;
  margin: 0 2px 0 auto;
}
.dashboard {
  flex: 1;
  padding: 13px 13px 0 16px;
}
.dashboard h3 {
  font-size: 9px;
  line-height: 10px;
  font-weight: 600;
  color: #555;
}
.welcome-box {
  position: relative;
  display: flex;
  height: 173px;
  margin-top: 12px;
  border: 1px solid #a5a5a5;
  background-color: #fff;
}
.tiles {
  display: flex;
  flex-direction: column;
  gap: 2px;
  width: 61px;
  padding-left: 1px;
  background-color: #ffe3b0;
}
.tiles a {
  display: flex;
  flex: 1;
  align-items: flex-end;
  padding: 0 2px 2px;
  background-color: #ffb53a;
  color: #8f6a25;
}
.tiles .start {
  background-color: #ff7218;
  color: #ffe0c8;
}
.steps {
  padding: 12px 0 0 25px;
  color: #4a93ab;
}
.steps li {
  display: flex;
  align-items: center;
  gap: 9px;
  height: 25px;
  padding-left: 23px;
  font-size: 10px;
}
.steps b {
  width: 14px;
  border-radius: 50%;
  background-color: #f3f3f3;
  font-weight: 400;
  line-height: 14px;
  text-align: center;
  color: #888;
}
.steps .first {
  gap: 6px;
  height: 24px;
  margin-bottom: 13px;
  padding-left: 0;
  font-size: 13px;
}
.steps .first b {
  width: 22px;
  background-color: #ff6c14;
  line-height: 22px;
  color: #fff;
}
.hide {
  position: absolute;
  right: 13px;
  bottom: 13px;
}
.dashboard .roles-title {
  margin-top: 21px;
}
.counts {
  line-height: 13px;
  color: #777;
}
.cards {
  display: flex;
  gap: 10px;
  margin-top: 5px;
}
.card {
  display: flex;
  align-items: center;
  gap: 8px;
  width: 146px;
  height: 40px;
  padding: 0 9px 9px 8px;
  border: 1px solid #bbb;
  background: linear-gradient(#2f9a41, #2f9a41) 5px 27px / 134px 2px no-repeat #fff;
  font-size: 10px;
}
.card svg {
  width: 12px;
  height: 12px;
}
.card span {
  margin-left: auto;
}
.scrollbar {
  width: 11px;
  padding: 10px 0 0 1px;
  background-color: #f1f1f1;
}
.thumb {
  height: 162px;
  background-color: #ccc;
}
.thumb.tall {
  height: 196px;
}

/* AD Sites and Services console */
.console .app-icon {
  width: 11px;
  height: 9px;
}
.console .titlebar .caption {
  margin-left: 2px;
}
.menubar {
  display: flex;
  gap: 10px;
  height: 14px;
  padding-left: 6px;
}
.toolbar {
  display: flex;
  align-items: center;
  gap: 2px;
  height: 20px;
  padding: 0 2px 3px;
  border-top: 1px solid #ddd;
  border-bottom: 2px solid #cfcfcf;
}
.toolbar button {
  padding: 1px;
}
.toolbar .sep {
  width: 1px;
  height: 12px;
  margin: 0 1px;
  background-color: #ccc;
}
.toolbar .pressed {
  padding: 1px 2px;
  background-color: #cde6f7;
}
.delete {
  color: #e02222;
}
.no-delete .delete {
  color: #222;
}
.console-body {
  display: grid;
  grid-template-columns: 124px 1fr;
  align-items: start;
  flex: 1;
}
.tree {
  height: 100%;
  border-right: 3px solid #d4d4d4;
  white-space: nowrap;
  overflow: hidden;
}
.tree li {
  display: flex;
  align-items: center;
  height: 11px;
  padding-left: 4px;
}
.tree .root {
  margin-left: 1px;
  border-left: 1px solid #b9a76a;
}
.tree .l2 {
  padding-left: 16px;
}
.tree .l3 {
  padding-left: 28px;
}
.tree .chev {
  width: 8px;
  height: 8px;
  margin-right: 3px;
}
.tree span {
  padding: 0 3px;
  line-height: 11px;
}
.tree .selected {
  background-color: #cce8ff;
}
.tree .picked {
  background-color: #d9d9d9;
}
.tree .rename {
  width: 90px;
  padding: 0 2px;
  border: 1px solid #999;
  line-height: 9px;
}
mark {
  background-color: #0a6fc8;
  color: #fff;
}
.list {
  width: 100%;
  border-collapse: collapse;
  table-layout: fixed;
}
.list th {
  height: 15px;
  padding: 0 4px;
  border-right: 1px solid #eee;
  font-weight: 400;
  text-align: left;
}
.list th:last-child {
  border-right: none;
}
.list td {
  height: 12px;
  padding: 0 0 0 4px;
  line-height: 10px;
  white-space: nowrap;
}
.list td svg {
  display: inline-block;
  vertical-align: middle;
}
.list .w-sm {
  width: 62px;
}
.list .w-lg {
  width: 93px;
}
.list .empty {
  height: 22px;
  text-align: center;
}

/* Dialogs */
.dialog {
  position: absolute;
  border: 1px solid #7fb4cf;
  background-color: #fff;
  box-shadow: 0 0 3px #bbb;
}
.dialog-title {
  display: flex;
  align-items: center;
  justify-content: space-between;
  height: 18px;
  padding: 0 5px 0 4px;
  background-color: #fff;
}
.dialog-title svg {
  width: 8px;
  height: 8px;
}
.actions {
  display: flex;
  justify-content: flex-end;
  gap: 8px;
}
.actions button {
  width: 53px;
  height: 15px;
  border: 1px solid #ccc;
  background-color: #e4e4e4;
}
.actions .default {
  border: 1px solid #2a7ab8;
}
.created {
  left: 172px;
  top: 144px;
  width: 298px;
}
.message {
  display: flex;
  gap: 5px;
  padding: 16px 10px 15px 15px;
  line-height: 9px;
}
.message svg {
  width: 20px;
  height: 20px;
}
.message p {
  margin-bottom: 10px;
}
.message .last {
  margin: 19px 0 0;
}
.created .actions {
  padding: 8px 12px;
  background-color: #f2f2f2;
}
.subnet {
  left: 10px;
  top: 4px;
  width: 269px;
  background-color: #f3f1f5;
}
.subnet-body,
.subnet .actions,
.moving {
  font-family: Roboto, "Liberation Sans", sans-serif;
}
.subnet .dialog-title,
.moving .dialog-title {
  font-family: "Open Sans", "Noto Sans", sans-serif;
}
.subnet-body {
  padding: 12px 13px 0;
  line-height: 8px;
}
.create-in {
  display: flex;
  align-items: center;
  gap: 10px;
  height: 31px;
  margin-bottom: 8px;
  padding-bottom: 8px;
  border-bottom: 1px solid #ccc;
}
.create-in svg {
  width: 20px;
  height: 20px;
}
.subnet-body a {
  color: #1a73c0;
  text-decoration: underline;
}
.subnet-body dl {
  display: grid;
  grid-template-columns: 50px 1fr;
  margin: 8px 0;
  line-height: 16px;
}
.subnet-body label {
  display: block;
}
.subnet-body input {
  display: block;
  width: 100%;
  height: 14px;
  margin: 3px 0 8px;
  padding: 0 1px;
  border: 1px solid #aaa;
  background-color: #f0f0f0;
  font: inherit;
}
.subnet-body .focused {
  border-color: #4a9fb5;
  background-color: #fff;
}
.pick-label {
  margin-top: 15px;
}
.sites {
  height: 61px;
  margin-top: 3px;
  padding: 3px 4px;
  border: 1px solid #999;
  background-color: #fff;
}
.sites li {
  display: flex;
  align-items: center;
  gap: 1px;
  height: 10px;
}
.sites .head {
  height: 13px;
  padding: 0 1px 3px;
}
.subnet .actions {
  margin: 14px 6px 0;
  padding: 8px 0 12px;
  border-top: 1px solid #ccc;
}
.subnet .actions button {
  width: 45px;
  height: 14px;
}
.actions button:disabled {
  background-color: #ccc;
  color: #aaa;
}
.moving {
  left: 172px;
  top: 170px;
  width: 289px;
  background-color: #f2f0f4;
}
.warning {
  display: flex;
  gap: 9px;
  padding: 8px 4px 0 7px;
  line-height: 8px;
  white-space: nowrap;
}
.warning svg {
  width: 20px;
  height: 20px;
}
.warning p {
  margin-bottom: 3px;
}
.warning label {
  display: flex;
  align-items: center;
  gap: 3px;
}
.warning input {
  appearance: none;
  width: 7px;
  height: 7px;
  margin: 0;
  border: 1px solid;
  border-color: #777 #eee #eee #777;
  background-color: #fff;
}
.classic {
  justify-content: center;
  gap: 6px;
  padding: 6px 30px 2px 0;
}
.classic button {
  width: 46px;
  height: 14px;
  border-color: #fff #777 #777 #fff;
  background-color: #f2f2f2;
}
.classic .default {
  border: 1px solid #555;
}
```
FILE: script.js
```js
// Put the shared markup into each window
function fill(target, id) {
  const template = document.getElementById(id);
  target.appendChild(template.content.cloneNode(true));
}

document.querySelectorAll('[data-template]').forEach(function (part) {
  fill(part, part.dataset.template);
});

document.querySelectorAll('.window-buttons').forEach(function (bar) {
  fill(bar, 'window-buttons');
});
```
